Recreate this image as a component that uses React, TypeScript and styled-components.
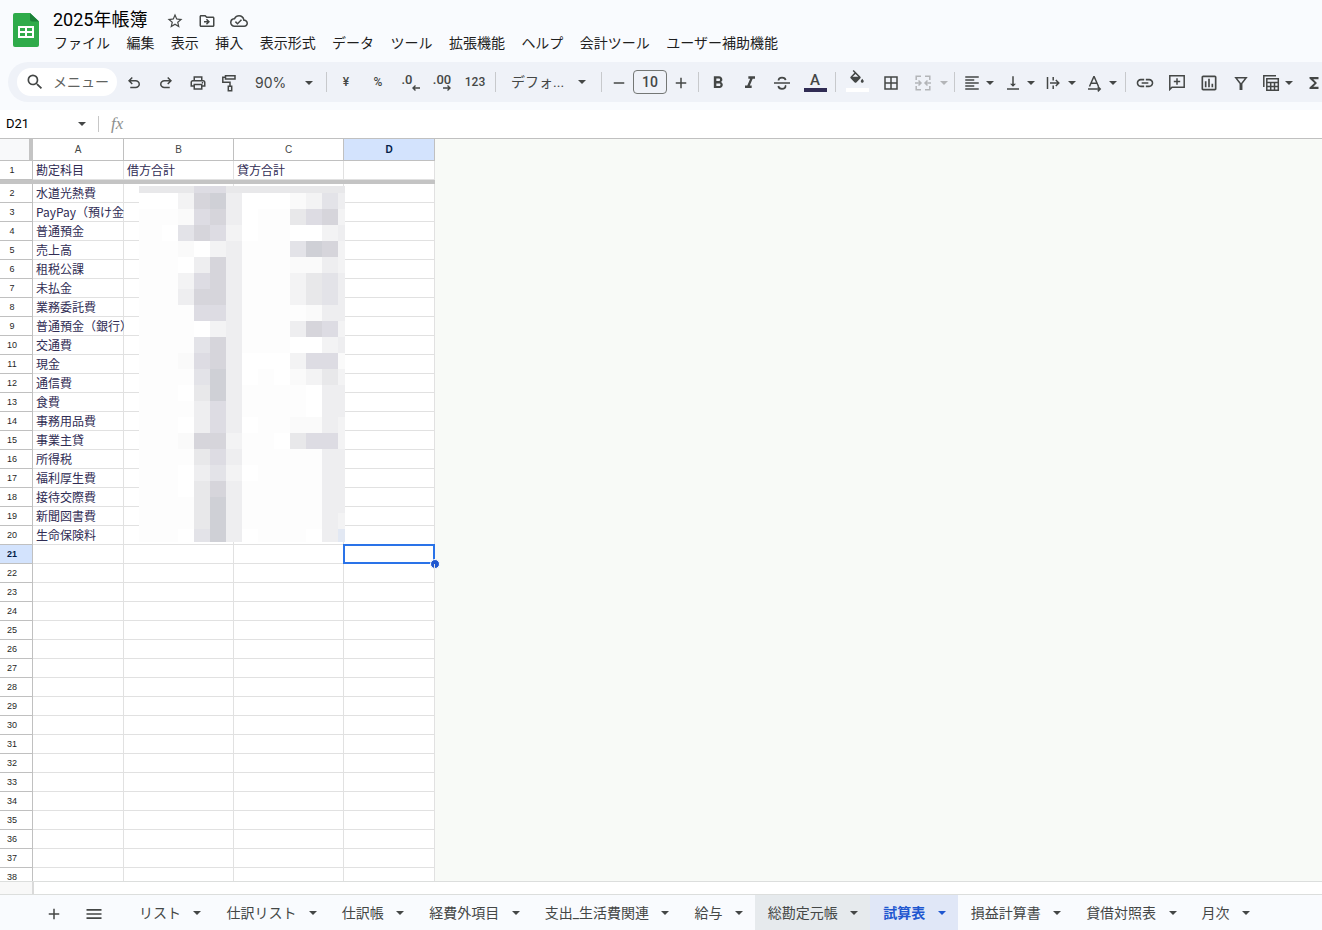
import React from "react";
import styled, { createGlobalStyle } from "styled-components";
import {
  MdStarBorder,
  MdOutlineDriveFileMove,
  MdOutlineCloudDone,
  MdSearch,
  MdFormatBold,
  MdFormatItalic,
  MdBorderAll,
  MdFormatAlignLeft,
  MdVerticalAlignBottom,
  MdInsertLink,
  MdOutlineInsertChart,
  MdFunctions,
  MdAdd,
  MdRemove,
  MdMenu,
} from "react-icons/md";

const ink = "#444746";
const navy = "#302c54";
const blue = "#1f57d0";
const line = "#e1e1e1";
const headLine = "#c0c0c0";

const uiFont = `Roboto, "Noto Sans CJK JP", sans-serif`;
const cellFont = `"Noto Sans CJK JP", sans-serif`;

const GlobalStyle = createGlobalStyle`
  *, *::before, *::after { box-sizing: border-box; }
  body { margin: 0; font-family: ${uiFont}; color: ${ink}; background: #f9fbfe; overflow: hidden; }
  button, input, select { font: inherit; color: inherit; border: 0; background: none; padding: 0; margin: 0; }
  button { cursor: pointer; }
  svg { display: block; flex: none; }
`;

const Page = styled.div`
  display: flex;
  flex-direction: column;
  height: 100vh;
  overflow: hidden;
`;

/* ---------- header ---------- */

const Header = styled.header`
  display: flex;
  align-items: flex-start;
  gap: 14px;
  height: 62px;
  flex: none;
  padding: 8px 0 0 13px;
`;

const Logo = styled.a`
  padding-top: 5px;
`;

const TitleRow = styled.div`
  display: flex;
  align-items: center;
  height: 24px;
`;

const Title = styled.h1`
  margin: 0 12px 0 0;
  font-size: 18px;
  line-height: 24px;
  font-weight: 400;
  color: #000;
`;

const TitleButton = styled.button`
  display: flex;
  justify-content: center;
  width: 32px;
  padding-top: 2px;
`;

const MenuBar = styled.nav`
  display: flex;
  justify-content: space-between;
  width: 724px;
  max-width: 100%;
  margin-left: 1px;
`;

const MenuItem = styled.button`
  font-size: 14px;
  line-height: 22px;
  color: #1f1f1f;
  white-space: nowrap;
`;

/* ---------- toolbar ---------- */

const Toolbar = styled.div`
  display: flex;
  align-items: center;
  flex: none;
  height: 40px;
  margin: 0 0 8px 8px;
  padding-left: 9px;
  border-radius: 20px 0 0 20px;
  background: #eff2f8;
  overflow: hidden;
`;

const SearchBox = styled.label`
  display: flex;
  align-items: center;
  flex: none;
  gap: 8px;
  width: 100px;
  height: 28px;
  margin-right: 1px;
  padding-left: 8px;
  border-radius: 14px;
  background: #fff;

  input {
    width: 60px;
    font-size: 14px;
    outline: 0;
  }
  input::placeholder {
    color: #5f6361;
    opacity: 1;
  }
`;

const Tool = styled.button<{ $width?: number }>`
  display: flex;
  align-items: center;
  justify-content: center;
  flex: none;
  width: ${(p) => p.$width ?? 32}px;
  height: 28px;
  font-size: 12px;
  font-weight: 500;

  > svg {
    margin-top: 2px;
  }
`;

const DropTool = styled.button<{ $muted?: boolean }>`
  display: flex;
  align-items: center;
  flex: none;
  gap: ${(p) => (p.$muted ? 8 : 5)}px;
  height: 28px;
  padding: ${(p) => (p.$muted ? "2px 3px 0 7px" : "2px 5px 0")};
  color: ${(p) => (p.$muted ? "#b3b5b8" : ink)};
`;

const Divider = styled.span`
  flex: none;
  width: 1px;
  height: 20px;
  margin: 0 3px;
  background: #c7c9cc;
`;

const SelectBox = styled.label`
  display: flex;
  align-items: center;
  flex: none;
  width: 99px;
  padding: 0 12px;

  select {
    flex: 1;
    min-width: 0;
    appearance: none;
    outline: 0;
    font-size: 14px;
    line-height: 20px;
  }
`;

const ZoomSelect = styled(SelectBox)`
  width: 77px;
  padding: 2px 10px 0 9px;

  select {
    font-family: Inter, sans-serif;
  }
`;

const SizeInput = styled.input`
  flex: none;
  width: 34px;
  height: 24px;
  border: 1px solid #747775;
  border-radius: 4px;
  text-align: center;
  font-size: 14px;
  font-weight: 500;
`;

const Swatched = styled.span<{ $color: string }>`
  display: flex;
  flex-direction: column;
  align-items: center;
  justify-content: flex-end;
  width: 23px;
  height: 20px;
  font-size: 15px;
  line-height: 16px;
  border-bottom: 4px solid ${(p) => p.$color};
`;

const Decimal = styled.span`
  display: flex;
  flex-direction: column;
  font-size: 13px;
  line-height: 11px;
`;

const ArrowRow = styled.span<{ $shift?: boolean }>`
  align-self: flex-end;
  margin-right: ${(p) => (p.$shift ? -7 : 0)}px;
`;

const DecimalTool = styled(Tool)`
  padding-right: 6px;
`;

/* ---------- formula bar ---------- */

const FormulaBar = styled.div`
  display: flex;
  align-items: center;
  flex: none;
  height: 29px;
  background: #fff;
  border-bottom: 1px solid ${headLine};
`;

const NameBox = styled.label`
  display: flex;
  align-items: center;
  width: 98px;
  padding: 0 12px 0 6px;

  input {
    flex: 1;
    min-width: 0;
    font-size: 13px;
    line-height: 16px;
    color: #000;
    outline: 0;
  }
`;

const FormulaDivider = styled.span`
  width: 1px;
  height: 16px;
  background: #c7c7c7;
`;

const FormulaField = styled.label`
  display: flex;
  flex: 1;
  align-items: center;
  gap: 12px;
  padding-left: 12px;

  em {
    font-family: "Liberation Serif", serif;
    font-size: 17px;
    line-height: 20px;
    color: #8d8f8e;
  }
  input {
    flex: 1;
    outline: 0;
  }
`;

/* ---------- grid ---------- */

const GridArea = styled.main`
  flex: 1;
  min-height: 0;
  overflow: hidden;
  background: #f8faf7;
`;

const Sheet = styled.div`
  position: relative;
  width: 435px;
`;

const Table = styled.table`
  width: 100%;
  table-layout: fixed;
  border-collapse: separate;
  border-spacing: 0;
  background: #fff;
`;

const Corner = styled.td`
  padding: 0;
  background: #f8f9fa;
  border-right: 4px solid #c4c4c4;
  border-bottom: 1px solid ${headLine};
`;

const ColHead = styled.th<{ $on: boolean }>`
  height: 22px;
  padding: 0;
  border-right: 1px solid ${headLine};
  border-bottom: 1px solid ${headLine};
  font-family: "Liberation Sans", sans-serif;
  font-size: 10px;
  line-height: 20px;
  font-weight: ${(p) => (p.$on ? 700 : 400)};
  color: ${(p) => (p.$on ? "#041e49" : ink)};
  background: ${(p) => (p.$on ? "#d3e3fd" : "#fff")};
`;

const RowHead = styled.th<{ $on: boolean }>`
  height: 19px;
  padding: 0 8px 0 0;
  border-right: 1px solid ${headLine};
  border-bottom: 1px solid ${headLine};
  font-family: "Liberation Sans", sans-serif;
  font-size: 9px;
  line-height: 18px;
  font-weight: ${(p) => (p.$on ? 700 : 400)};
  color: ${(p) => (p.$on ? "#041e49" : "#1f1f1f")};
  background: ${(p) => (p.$on ? "#d3e3fd" : "#fff")};
`;

const Cell = styled.td`
  position: relative;
  height: 19px;
  padding: 0 0 0 3px;
  border-right: 1px solid ${line};
  border-bottom: 1px solid ${line};
  font-family: ${cellFont};
  font-size: 12px;
  line-height: 18px;
  color: ${navy};
`;

/* Long account names run on over the empty cell to their right. */
const CellText = styled.div`
  height: 18px;
  white-space: nowrap;
`;

const FrozenBar = styled.td`
  height: 4px;
  padding: 0;
  background: #c4c4c4;
`;

const Selection = styled.div`
  position: absolute;
  inset: -1px;
  border: 2px solid #2a73e8;

  &::after {
    content: "";
    position: absolute;
    right: -7px;
    bottom: -7px;
    width: 10px;
    height: 10px;
    border: 1px solid #fff;
    border-radius: 50%;
    background: ${blue};
    background-clip: border-box;
  }
`;

const Redaction = styled.svg`
  position: absolute;
  left: 139px;
  top: 47px;
`;

const ScrollStrip = styled.div`
  display: flex;
  flex: none;
  height: 13px;
  background: #fff;
  border-top: 1px solid #dcdedd;

  &::before {
    content: "";
    width: 34px;
    background: #f8f8f8;
    border-right: 2px solid #dadada;
  }
`;

/* ---------- sheet tabs ---------- */

const TabBar = styled.footer`
  display: flex;
  flex: none;
  height: 36px;
  padding-left: 34px;
  background: #f9fbfe;
  border-top: 1px solid #dcdedd;
  overflow: hidden;
`;

const TabTool = styled.button`
  display: flex;
  align-items: center;
  justify-content: center;
  flex: none;
  width: 40px;
  padding-top: 2px;
`;

const Tabs = styled.div`
  display: flex;
  flex: none;
  width: 1136px;
  margin-left: 12px;
`;

const Tab = styled.button<{ $state?: "hover" | "active" }>`
  display: flex;
  flex: 1 1 auto;
  align-items: center;
  justify-content: space-between;
  gap: 8px;
  padding: 1px 12px 0 13px;
  font-size: 14px;
  line-height: 20px;
  white-space: nowrap;
  font-weight: ${(p) => (p.$state === "active" ? 700 : 400)};
  color: ${(p) => (p.$state === "active" ? blue : ink)};
  background: ${(p) =>
    p.$state === "active" ? "#e0e7f7" : p.$state === "hover" ? "#e6eaed" : "transparent"};
`;

/* ---------- drawings ---------- */

const Caret = () => (
  <svg width="8" height="4" viewBox="0 0 8 4" aria-hidden>
    <path d="M0 0h8L4 4z" fill="currentColor" />
  </svg>
);

const Glyph = ({ d, box = 24 }: { d: string; box?: number }) => (
  <svg width="18" height="18" viewBox={`0 0 ${box} ${box}`} aria-hidden>
    <path d={d} fill="currentColor" fillRule="evenodd" />
  </svg>
);

const Stroke = ({ children, width = 1.5 }: { children: React.ReactNode; width?: number }) => (
  <svg
    width="18"
    height="18"
    viewBox="0 0 18 18"
    fill="none"
    stroke="currentColor"
    strokeWidth={width}
    aria-hidden
  >
    {children}
  </svg>
);

const undoPath =
  "M7 19v-2h7.1q1.575 0 2.738-1Q18 15 18 13.5T16.838 11Q15.675 10 14.1 10H7.8l2.6 2.6L9 14 4 9l5-5 1.4 1.4L7.8 8h6.3q2.425 0 4.163 1.575T20 13.5t-1.737 3.925T14.1 19z";
const redoPath =
  "M17 19v-2H9.9q-1.575 0-2.738-1Q6 15 6 13.5T7.162 11Q8.325 10 9.9 10h6.3l-2.6 2.6L15 14l5-5-5-5-1.4 1.4L16.2 8H9.9Q7.475 8 5.737 9.575T4 13.5t1.737 3.925T9.9 19z";
const printPath =
  "M16 8V5H8v3H6V3h12v5zM18 12.5q.425 0 .713-.288T19 11.5t-.288-.712T18 10.5t-.712.288T17 11.5t.288.713.712.287M16 19v-4H8v4zM18 21H6v-4H2v-6q0-1.275.875-2.137T5 8h14q1.275 0 2.138.863T22 11v6h-4zM20 15v-4q0-.425-.288-.712T19 10H5q-.425 0-.712.288T4 11v4h2v-2h12v2z";
const bucketPath =
  "M16.56 8.94L7.62 0 6.21 1.41l2.38 2.38-5.15 5.15c-.59.59-.59 1.54 0 2.12l5.5 5.5c.29.29.68.44 1.06.44s.77-.15 1.06-.44l5.5-5.5c.59-.58.59-1.53 0-2.12zM6 9L10 5.21 13.8 9zM19 11.5s-2 2.17-2 3.5c0 1.1.9 2 2 2s2-.9 2-2c0-1.33-2-3.5-2-3.5z";

const SheetsLogo = () => (
  <svg width="26" height="34" viewBox="0 0 26 34" aria-hidden>
    <path d="M2 0h15l9 8.500V32a2 2 0 0 1-2 2H2a2 2 0 0 1-2-2V2a2 2 0 0 1 2-2z" fill="#2fab4a" />
    <path d="M17 0l9 8.500h-7a2 2 0 0 1-2-2z" fill="#1b8038" />
    <path
      d="M5 13h16v12H5zM7 15v3h5v-3zM14 15v3h5v-3zM7 20v3h5v-3zM14 20v3h5v-3z"
      fill="#fff"
      fillRule="evenodd"
    />
  </svg>
);

const PaintRoller = () => (
  <Stroke>
    <path d="M4.500 1.700H14V5H4.500zM4.500 3.300H1.800V8.300H9v4M7.300 12.300h3.400v4.400H7.300z" />
  </Stroke>
);

const Strikethrough = () => (
  <Stroke width={1.7}>
    <path d="M1 9h16M12.600 6.200C12.300 4.300 10.800 3.600 9 3.600S5.500 4.500 5.500 6.600M5.300 12c.3 2 1.800 2.800 3.700 2.800s3.500-.9 3.500-2.600c0-.4 0-.7-.2-1" />
  </Stroke>
);

const MergeCells = () => (
  <Stroke>
    <path d="M7 2.200H2.200V6M11 2.200h4.800V6M7 15.800H2.200V12M11 15.800h4.800V12M1 9h5.500M17 9h-5.500M4.500 6.500L7 9l-2.500 2.500M13.500 6.500L11 9l2.500 2.500" />
  </Stroke>
);

const OverflowText = () => (
  <Stroke>
    <path d="M2.500 3v12M8.200 3v3.500M8.200 11.500V15M5 9h8.500M10.800 6L13.800 9l-3 3" />
  </Stroke>
);

const RotateText = () => (
  <Stroke>
    <path d="M3.500 12.500L7.800 2.800h.4l4.300 9.700M5 9.300h6M2 15h12M11.800 12.600l2.400 2.400-2.400 2.400" />
  </Stroke>
);

const AddComment = () => (
  <Stroke>
    <path d="M1.800 15.500V1.800h14.400v11.400H4zM9 4.300v6.400M5.800 7.500h6.400" />
  </Stroke>
);

const Filter = () => (
  <Stroke>
    <path d="M3.800 3.700h10.400L9.700 9.500v5.800H8.300V9.500z" />
  </Stroke>
);

const TableViews = () => (
  <Stroke>
    <path d="M1.800 13V1.800H14M4.800 4.800h11.500v11.500H4.800zM4.800 8.500h11.500M4.800 12.400h11.500M8.700 8.500v7.800M12.500 8.500v7.800" />
  </Stroke>
);

const SmallArrow = ({ right }: { right?: boolean }) => (
  <svg width="8" height="6" viewBox="0 0 8 6" fill="none" stroke="currentColor" strokeWidth="1.400" aria-hidden>
    <path d={right ? "M0 3h7M4.500 .5L7 3 4.500 5.500" : "M8 3H1M3.500 .5L1 3l2.500 2.500"} />
  </svg>
);

/* ---------- data ---------- */

const menus = [
  "ファイル", "編集", "表示", "挿入", "表示形式", "データ", "ツール",
  "拡張機能", "ヘルプ", "会計ツール", "ユーザー補助機能",
];

const accounts = [
  "水道光熱費", "PayPay（預け金", "普通預金", "売上高", "租税公課", "未払金",
  "業務委託費", "普通預金（銀行）", "交通費", "現金", "通信費", "食費",
  "事務用品費", "事業主貸", "所得税", "福利厚生費", "接待交際費", "新聞図書費",
  "生命保険料",
];

const columns = ["A", "B", "C", "D"];

const sheets: { name: string; state?: "hover" | "active" }[] = [
  { name: "リスト" },
  { name: "仕訳リスト" },
  { name: "仕訳帳" },
  { name: "経費外項目" },
  { name: "支出_生活費関連" },
  { name: "給与" },
  { name: "総勘定元帳", state: "hover" },
  { name: "試算表", state: "active" },
  { name: "損益計算書" },
  { name: "貸借対照表" },
  { name: "月次" },
];

/* Tone of each mosaic block that hides the amounts, one string per block row. */
const tones: Record<string, string> = {
  ".": "#fdfdfd",
  w: "#ffffff",
  a: "#fafafa",
  b: "#f3f3f4",
  c: "#eeeef0",
  d: "#e8e8ea",
  e: "#e3e3e8",
  f: "#dddce3",
  g: "#d6d5db",
  h: "#cfd0d6",
  i: "#e2e8f3",
};

const mosaic = [
  "ddddffdddddddd",
  "wwwbghcwwwabec",
  "...afgcw..dfgb",
  "..wegfbw..wwbc",
  "...awbc...ehgb",
  "...wcgc...aacb",
  "...bfgc...bdec",
  "...cggc...bdec",
  "....ffc....acc",
  "....wbc...cgfb",
  "....egc...wwbc",
  "...afgcwwwbffa",
  "....ehcw.wabdb",
  "...wdhc....wcc",
  "....cfc....wcc",
  "...wcfcw..aacb",
  "...aggb..wdffb",
  "....dfc.....cc",
  "...wcebw....cc",
  "...wdgc.....cc",
  "....dhc.....cc",
  "....dhc.....cb",
  "...wehcw...wci",
];

const Mosaic = () => (
  <Redaction width="206" height="356" aria-hidden shapeRendering="crispEdges">
    {mosaic.map((row, r) =>
      [...row].map((t, c) => (
        <rect
          key={`${r}-${c}`}
          x={c === 0 ? 0 : c * 16 - 9}
          y={r === 0 ? 0 : r * 16 - 9}
          width={c === 0 ? 7 : 16}
          height={r === 0 ? 7 : 16}
          fill={tones[t]}
        />
      )),
    )}
  </Redaction>
);

const GridRow = ({ n, values }: { n: number; values: string[] }) => (
  <tr>
    <RowHead scope="row" $on={n === 21}>{n}</RowHead>
    {columns.map((c, i) => (
      <Cell key={c}>
        {values[i] && <CellText>{values[i]}</CellText>}
        {n === 21 && c === "D" && <Selection />}
      </Cell>
    ))}
  </tr>
);

export default function App() {
  return (
    <Page>
      <GlobalStyle />
      <Header>
        <Logo href="#" aria-label="スプレッドシート ホーム"><SheetsLogo /></Logo>
        <div>
          <TitleRow>
            <Title>2025年帳簿</Title>
            <TitleButton aria-label="スター"><MdStarBorder size={18} /></TitleButton>
            <TitleButton aria-label="移動"><MdOutlineDriveFileMove size={18} /></TitleButton>
            <TitleButton aria-label="保存状況"><MdOutlineCloudDone size={18} /></TitleButton>
          </TitleRow>
          <MenuBar>
            {menus.map((m) => <MenuItem key={m}>{m}</MenuItem>)}
          </MenuBar>
        </div>
      </Header>

      <Toolbar role="toolbar">
        <SearchBox>
          <MdSearch size={20} />
          <input aria-label="メニューを検索" placeholder="メニュー" />
        </SearchBox>
        <Tool aria-label="元に戻す"><Glyph d={undoPath} /></Tool>
        <Tool aria-label="やり直し"><Glyph d={redoPath} /></Tool>
        <Tool aria-label="印刷"><Glyph d={printPath} /></Tool>
        <Tool aria-label="書式を貼り付け"><PaintRoller /></Tool>
        <ZoomSelect>
          <select aria-label="ズーム" defaultValue="90%"><option>90%</option></select>
          <Caret />
        </ZoomSelect>
        <Divider />
        <Tool aria-label="通貨">¥</Tool>
        <Tool aria-label="パーセント">%</Tool>
        <DecimalTool aria-label="小数点以下の桁数を減らす">
          <Decimal>.0<ArrowRow $shift><SmallArrow /></ArrowRow></Decimal>
        </DecimalTool>
        <Tool aria-label="小数点以下の桁数を増やす">
          <Decimal>.00<ArrowRow><SmallArrow right /></ArrowRow></Decimal>
        </Tool>
        <Tool $width={34} aria-label="表示形式の詳細">123</Tool>
        <Divider />
        <SelectBox>
          <select aria-label="フォント" defaultValue="デフォ..."><option>デフォ...</option></select>
          <Caret />
        </SelectBox>
        <Divider />
        <Tool $width={28} aria-label="フォントサイズを縮小"><MdRemove size={18} /></Tool>
        <SizeInput aria-label="フォントサイズ" defaultValue="10" />
        <Tool $width={28} aria-label="フォントサイズを拡大"><MdAdd size={18} /></Tool>
        <Divider />
        <Tool aria-label="太字"><MdFormatBold size={20} /></Tool>
        <Tool aria-label="斜体"><MdFormatItalic size={20} /></Tool>
        <Tool aria-label="取り消し線"><Strikethrough /></Tool>
        <Tool $width={34} aria-label="テキストの色"><Swatched $color={navy}>A</Swatched></Tool>
        <Divider />
        <Tool $width={36} aria-label="塗りつぶしの色">
          <Swatched $color="#fff"><Glyph d={bucketPath} /></Swatched>
        </Tool>
        <Tool aria-label="枠線"><MdBorderAll size={18} /></Tool>
        <DropTool $muted aria-label="セルを結合"><MergeCells /><Caret /></DropTool>
        <Divider />
        <DropTool aria-label="水平方向の配置"><MdFormatAlignLeft size={18} /><Caret /></DropTool>
        <DropTool aria-label="垂直方向の配置"><MdVerticalAlignBottom size={18} /><Caret /></DropTool>
        <DropTool aria-label="テキストを折り返す"><OverflowText /><Caret /></DropTool>
        <DropTool aria-label="テキストの回転"><RotateText /><Caret /></DropTool>
        <Divider />
        <Tool aria-label="リンクを挿入"><MdInsertLink size={20} /></Tool>
        <Tool aria-label="コメントを挿入"><AddComment /></Tool>
        <Tool aria-label="グラフを挿入"><MdOutlineInsertChart size={20} /></Tool>
        <Tool aria-label="フィルタを作成"><Filter /></Tool>
        <DropTool aria-label="テーブルビュー"><TableViews /><Caret /></DropTool>
        <Tool aria-label="関数"><MdFunctions size={18} /></Tool>
      </Toolbar>

      <FormulaBar>
        <NameBox>
          <input aria-label="名前ボックス" defaultValue="D21" />
          <Caret />
        </NameBox>
        <FormulaDivider />
        <FormulaField>
          <em>fx</em>
          <input aria-label="数式" />
        </FormulaField>
      </FormulaBar>

      <GridArea>
        <Sheet>
          <Table>
            <colgroup>
              <col style={{ width: 33 }} />
              <col style={{ width: 91 }} />
              <col style={{ width: 110 }} />
              <col style={{ width: 110 }} />
              <col style={{ width: 91 }} />
            </colgroup>
            <thead>
              <tr>
                <Corner />
                {columns.map((c) => (
                  <ColHead key={c} scope="col" $on={c === "D"}>{c}</ColHead>
                ))}
              </tr>
            </thead>
            <tbody>
              <GridRow n={1} values={["勘定科目", "借方合計", "貸方合計"]} />
              <tr><FrozenBar colSpan={5} /></tr>
              {Array.from({ length: 37 }, (_, i) => (
                <GridRow key={i} n={i + 2} values={accounts[i] ? [accounts[i]] : []} />
              ))}
            </tbody>
          </Table>
          <Mosaic />
        </Sheet>
      </GridArea>

      <ScrollStrip />
      <TabBar>
        <TabTool aria-label="シートを追加"><MdAdd size={18} /></TabTool>
        <TabTool aria-label="すべてのシート"><MdMenu size={20} /></TabTool>
        <Tabs>
          {sheets.map((s) => (
            <Tab key={s.name} $state={s.state}>
              {s.name}
              <Caret />
            </Tab>
          ))}
        </Tabs>
      </TabBar>
    </Page>
  );
}
